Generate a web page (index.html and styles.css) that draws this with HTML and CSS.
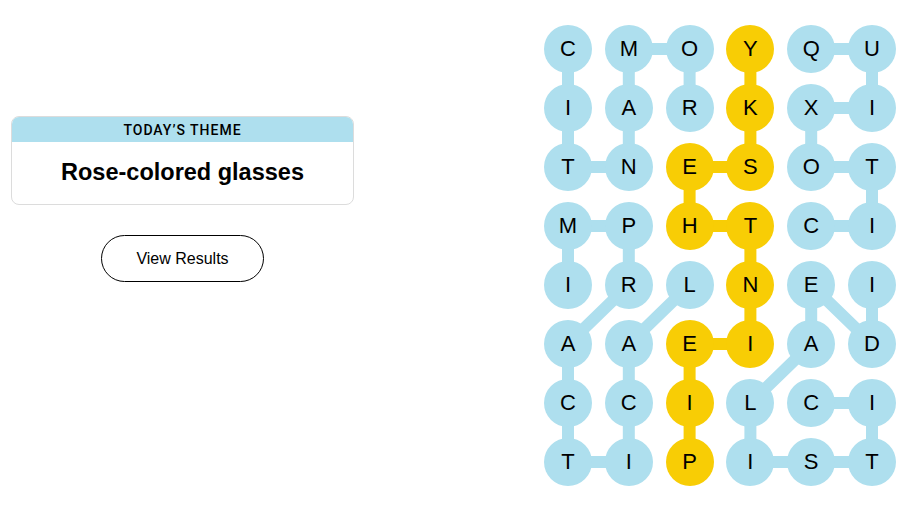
FILE: index.html
```html
<!DOCTYPE html>
<html lang="en">
<head>
  <meta charset="UTF-8">
  <meta name="viewport" content="width=device-width, initial-scale=1.0">
  <title>Strands</title>
  <link rel="stylesheet" href="styles.css">
</head>
<body>
  <main class="game">
    <!-- Theme + results -->
    <section class="side">
      <div class="theme-card">
        <h2 class="theme-label">Today’s Theme</h2>
        <p class="theme-text">Rose-colored glasses</p>
      </div>
      <button class="btn-results" type="button">View Results</button>
    </section>

    <!-- Board -->
    <section class="board">
      <svg class="board-lines" viewBox="0 0 352 461" width="352" height="461" aria-hidden="true">
        <g fill="none" stroke-width="12" stroke-linejoin="round" stroke-linecap="round">
          <polyline class="line-found" points="24,24 24,83 24,142 84.8,142 84.8,83 84.8,24 145.6,24 145.6,83" />
          <polyline class="line-found" points="267.2,24 328,24 328,83 267.2,83 267.2,142 328,142 328,201 267.2,201" />
          <polyline class="line-found" points="24,260 24,201 84.8,201 84.8,260 24,319 24,378 24,437 84.8,437 84.8,378 84.8,319 145.6,260" />
          <polyline class="line-found" points="328,260 328,319 267.2,260 267.2,319 206.4,378 206.4,437 267.2,437 328,437 328,378 267.2,378" />
          <polyline class="line-span" points="206.4,24 206.4,83 206.4,142 145.6,142 145.6,201 206.4,201 206.4,260 206.4,319 145.6,319 145.6,378 145.6,437" />
        </g>
      </svg>
      <div class="grid">
        <button class="cell found">C</button>
        <button class="cell found">M</button>
        <button class="cell found">O</button>
        <button class="cell span">Y</button>
        <button class="cell found">Q</button>
        <button class="cell found">U</button>

        <button class="cell found">I</button>
        <button class="cell found">A</button>
        <button class="cell found">R</button>
        <button class="cell span">K</button>
        <button class="cell found">X</button>
        <button class="cell found">I</button>

        <button class="cell found">T</button>
        <button class="cell found">N</button>
        <button class="cell span">E</button>
        <button class="cell span">S</button>
        <button class="cell found">O</button>
        <button class="cell found">T</button>

        <button class="cell found">M</button>
        <button class="cell found">P</button>
        <button class="cell span">H</button>
        <button class="cell span">T</button>
        <button class="cell found">C</button>
        <button class="cell found">I</button>

        <button class="cell found">I</button>
        <button class="cell found">R</button>
        <button class="cell found">L</button>
        <button class="cell span">N</button>
        <button class="cell found">E</button>
        <button class="cell found">I</button>

        <button class="cell found">A</button>
        <button class="cell found">A</button>
        <button class="cell span">E</button>
        <button class="cell span">I</button>
        <button class="cell found">A</button>
        <button class="cell found">D</button>

        <button class="cell found">C</button>
        <button class="cell found">C</button>
        <button class="cell span">I</button>
        <button class="cell found">L</button>
        <button class="cell found">C</button>
        <button class="cell found">I</button>

        <button class="cell found">T</button>
        <button class="cell found">I</button>
        <button class="cell span">P</button>
        <button class="cell found">I</button>
        <button class="cell found">S</button>
        <button class="cell found">T</button>
      </div>
    </section>
  </main>
</body>
</html>
```

FILE: styles.css
```css
/* Global Styles */
:root {
  --found-blue: #aedfee;
  --span-yellow: #f8cd05;
  --ink: #000;
  --card-border: #dcdcdc;
}

* {
  margin: 0;
  padding: 0;
  box-sizing: border-box;
}

body {
  background-color: white;
  color: var(--ink);
  font-family: 'Liberation Sans', Arial, sans-serif;
}

.game {
  display: flex;
  justify-content: space-between;
  padding: 25px 10px 0 11px;
}

/* Theme side */
.side {
  width: 343px;
  padding-top: 91px;
  display: flex;
  flex-direction: column;
  align-items: center;
  gap: 30px;
}

.theme-card {
  width: 100%;
  border: 1px solid var(--card-border);
  border-radius: 8px;
  overflow: hidden;
}

.theme-label {
  background-color: var(--found-blue);
  height: 25px;
  line-height: 26px;
  text-align: center;
  font-family: 'Roboto', 'Liberation Sans', sans-serif;
  font-size: 14px;
  font-weight: 500;
  letter-spacing: 1px;
  text-transform: uppercase;
}

.theme-text {
  height: 62px;
  line-height: 60px;
  text-align: center;
  font-size: 23.5px;
  font-weight: 700;
}

.btn-results {
  width: 163px;
  height: 47px;
  border: 1px solid var(--ink);
  border-radius: 24px;
  background: white;
  color: var(--ink);
  font-family: inherit;
  font-size: 16px;
  cursor: pointer;
}

/* Board */
.board {
  position: relative;
  width: 352px;
  height: 461px;
}

.board-lines {
  position: absolute;
  top: 0;
  left: 0;
}

.line-found {
  stroke: var(--found-blue);
}

.line-span {
  stroke: var(--span-yellow);
}

.grid {
  position: relative;
  display: grid;
  grid-template-columns: repeat(6, 48px);
  grid-auto-rows: 48px;
  column-gap: 12.8px;
  row-gap: 11px;
}

.cell {
  width: 48px;
  height: 48px;
  border: none;
  border-radius: 50%;
  font-family: inherit;
  font-size: 22px;
  color: var(--ink);
  cursor: pointer;
}

.cell.found {
  background-color: var(--found-blue);
}

.cell.span {
  background-color: var(--span-yellow);
}
```
